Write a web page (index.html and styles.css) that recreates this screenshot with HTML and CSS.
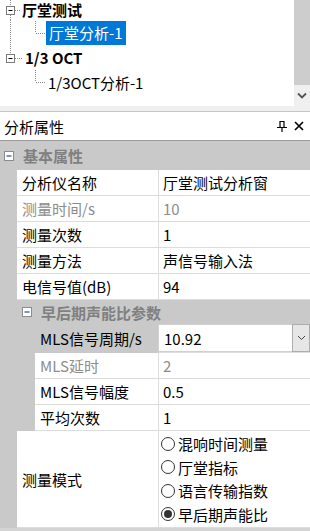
FILE: index.html
```html
<!DOCTYPE html>
<html lang="zh-CN">
<head>
  <meta charset="UTF-8">
  <title>分析属性</title>
  <link rel="stylesheet" href="styles.css">
</head>
<body>

  <div class="tree">
    <div class="tree-body">
      <div class="node node-top">
        <svg width="22" height="20" viewBox="0 0 22 20">
          <path class="dots" d="M10.5 0V6M10.5 15V20M15 10.5H21"/>
          <rect class="box" x="6.5" y="6.5" width="8" height="8"/>
          <path class="minus" d="M8.5 10.5H12.5"/>
        </svg>
        <span class="node-label bold">厅堂测试</span>
      </div>
      <div class="node node-child">
        <svg width="46" height="26" viewBox="0 0 46 26">
          <path class="dots" d="M10.5 0V26M35.5 1V13M36 13.5H46"/>
        </svg>
        <span class="node-label selected">厅堂分析-1</span>
      </div>
      <div class="node node-mid">
        <svg width="25" height="24" viewBox="0 0 25 24">
          <path class="dots" d="M10.5 0V8M15 12.5H23"/>
          <rect class="box" x="6.5" y="8.5" width="8" height="8"/>
          <path class="minus" d="M8.5 12.5H12.5"/>
        </svg>
        <span class="node-label bold">1/3 OCT</span>
      </div>
      <div class="node node-child">
        <svg width="48" height="26" viewBox="0 0 48 26">
          <path class="dots" d="M35.5 0V12M36 12.5H46"/>
        </svg>
        <span class="node-label">1/3OCT分析-1</span>
      </div>
    </div>
    <div class="scrollbar">
      <div class="thumb"></div>
      <div class="scroll-btn">
        <svg width="10" height="7" viewBox="0 0 10 7"><path d="M1 1.5L5 5.5L9 1.5" fill="none" stroke="#555" stroke-width="1.8"/></svg>
      </div>
    </div>
  </div>

  <div class="spacer"></div>

  <div class="panel-head">
    <span class="panel-title">分析属性</span>
    <svg class="head-icon" width="10" height="11" viewBox="0 0 10 11">
      <path d="M3 0.5H7V6.5H3Z M0 6.5H10 M5 6.5V11" fill="none" stroke="#000" stroke-width="1.2"/>
    </svg>
    <svg class="head-icon" width="10" height="10" viewBox="0 0 10 10">
      <path d="M1 1L9 9M9 1L1 9" stroke="#000" stroke-width="1.7"/>
    </svg>
  </div>

  <div class="grid">
    <div class="cat">
      <svg class="cat-box" width="10" height="10" viewBox="0 0 10 10">
        <rect x="0.5" y="0.5" width="9" height="9" fill="#fff" stroke="#8c8c8c"/>
        <path d="M2.5 5H7.5" stroke="#2b4f82" stroke-width="1.2"/>
      </svg>
      <span>基本属性</span>
    </div>

    <div class="row">
      <div class="indent"></div>
      <div class="name">分析仪名称</div>
      <div class="value">厅堂测试分析窗</div>
    </div>
    <div class="row">
      <div class="indent"></div>
      <div class="name muted">测量时间/s</div>
      <div class="value muted">10</div>
    </div>
    <div class="row">
      <div class="indent"></div>
      <div class="name">测量次数</div>
      <div class="value">1</div>
    </div>
    <div class="row">
      <div class="indent"></div>
      <div class="name">测量方法</div>
      <div class="value">声信号输入法</div>
    </div>
    <div class="row">
      <div class="indent"></div>
      <div class="name">电信号值(dB)</div>
      <div class="value">94</div>
    </div>

    <div class="cat cat-sub">
      <svg class="cat-box" width="10" height="10" viewBox="0 0 10 10">
        <rect x="0.5" y="0.5" width="9" height="9" fill="#fff" stroke="#8c8c8c"/>
        <path d="M2.5 5H7.5" stroke="#2b4f82" stroke-width="1.2"/>
      </svg>
      <span>早后期声能比参数</span>
    </div>

    <div class="row row-active">
      <div class="indent deep"></div>
      <div class="name active">MLS信号周期/s</div>
      <div class="value combo">
        <div class="combo-text">10.92</div>
        <div class="combo-btn">
          <svg width="9" height="6" viewBox="0 0 9 6"><path d="M1 1L4.5 4.5L8 1" fill="none" stroke="#444" stroke-width="1"/></svg>
        </div>
      </div>
    </div>
    <div class="row">
      <div class="indent deep"></div>
      <div class="name muted">MLS延时</div>
      <div class="value muted">2</div>
    </div>
    <div class="row">
      <div class="indent deep"></div>
      <div class="name">MLS信号幅度</div>
      <div class="value">0.5</div>
    </div>
    <div class="row">
      <div class="indent deep"></div>
      <div class="name">平均次数</div>
      <div class="value">1</div>
    </div>

    <div class="row row-mode">
      <div class="indent"></div>
      <div class="name">测量模式</div>
      <div class="value radios">
        <label class="radio"><span class="dot"></span>混响时间测量</label>
        <label class="radio"><span class="dot"></span>厅堂指标</label>
        <label class="radio"><span class="dot"></span>语言传输指数</label>
        <label class="radio"><span class="dot on"></span>早后期声能比</label>
      </div>
    </div>
  </div>

</body>
</html>
```

FILE: styles.css
```css
* {
  box-sizing: border-box;
}
body {
  margin: 0;
  width: 310px;
  height: 531px;
  overflow: hidden;
  font-family: "Noto Sans CJK SC", "Noto Sans", sans-serif;
  font-size: 15px;
  color: #000;
  background: #d4d4d4;
}
.tree {
  display: flex;
  height: 106px;
  background: #fff;
}
.tree-body {
  flex: 1;
}
.node {
  display: flex;
  align-items: center;
}
.node svg {
  flex: none;
}
.node-top {
  height: 20px;
}
.node-mid {
  height: 24px;
}
.node-child {
  height: 26px;
}
.dots {
  fill: none;
  stroke: #8a8a8a;
  stroke-dasharray: 1 1;
}
.box {
  fill: #fff;
  stroke: #7a7a7a;
}
.minus {
  stroke: #000;
}
.node-label {
  white-space: nowrap;
  line-height: 20px;
}
.bold {
  font-weight: bold;
}
.selected {
  background: #0078d7;
  color: #fff;
  line-height: 24px;
  padding: 0 3px;
}
.scrollbar {
  width: 16px;
  display: flex;
  flex-direction: column;
  background: #f0f0f0;
}
.thumb {
  height: 85px;
  background: #cdcdcd;
}
.scroll-btn {
  flex: 1;
  display: flex;
  align-items: center;
  justify-content: center;
}
.spacer {
  height: 5px;
  background: #f0f0f0;
}
.panel-head {
  height: 30px;
  background: #fff;
  border-top: 1px solid #c6c6c6;
  border-bottom: 1px solid #9a9a9a;
  display: flex;
  align-items: center;
  padding: 0 6px 0 4px;
  gap: 7px;
}
.panel-title {
  flex: 1;
}
.grid {
  background: #fff;
}
.cat {
  display: flex;
  align-items: center;
  height: 29px;
  background: #c9c9c9;
  color: #808080;
  font-weight: bold;
}
.cat-box {
  margin: 0 9px 0 4px;
}
.cat-sub {
  height: 24px;
}
.cat-sub .cat-box {
  margin-left: 22px;
}
.row {
  display: flex;
  height: 26px;
}
.indent {
  width: 17px;
  flex: none;
  background: #c9c9c9;
}
.indent.deep {
  width: 35px;
}
.name {
  width: 141px;
  flex: none;
  padding-left: 5px;
  border-bottom: 1px solid #dcdcdc;
  display: flex;
  align-items: center;
  white-space: nowrap;
}
.deep + .name {
  width: 123px;
}
.value {
  flex: 1;
  padding-left: 4px;
  border-left: 1px solid #dcdcdc;
  border-bottom: 1px solid #dcdcdc;
  display: flex;
  align-items: center;
  white-space: nowrap;
}
.muted {
  color: #8c8c8c;
}
.row-active {
  height: 29px;
}
.name.active {
  background: #c9c9c9;
  border-bottom-color: #c9c9c9;
}
.combo {
  padding: 0;
  border-left: none;
  align-items: stretch;
}
.combo-text {
  flex: 1;
  display: flex;
  align-items: center;
  padding-left: 5px;
  border: 1px solid #d0d0d0;
  border-right: none;
}
.combo-btn {
  width: 18px;
  display: flex;
  align-items: center;
  justify-content: center;
  background: #e6e6e6;
  border: 1px solid #adadad;
}
.row-mode {
  height: 97px;
}
.radios {
  flex-direction: column;
  align-items: flex-start;
  justify-content: flex-start;
  padding: 1px 0 0 2px;
}
.radio {
  display: flex;
  align-items: center;
  height: 23.5px;
  gap: 3px;
}
.dot {
  width: 14px;
  height: 14px;
  border: 1px solid #333;
  border-radius: 50%;
  background: #fff;
  display: flex;
  align-items: center;
  justify-content: center;
}
.dot.on::after {
  content: "";
  width: 8px;
  height: 8px;
  border-radius: 50%;
  background: #333;
}
```
